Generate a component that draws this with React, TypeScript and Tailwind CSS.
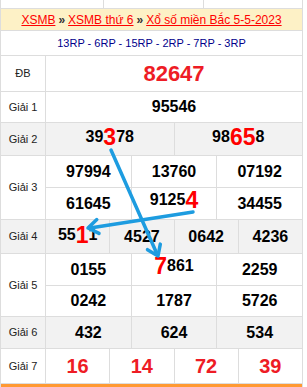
import React from "react";

const B = "border-[#dddddd]";

function Cell({ children, className = "" }: { children?: React.ReactNode; className?: string }) {
  return (
    <div className={`flex-1 flex items-center justify-center border-l ${B} ${className}`}>{children}</div>
  );
}

function Hi({ children }: { children: React.ReactNode }) {
  return <span className="text-[#ff0000] text-[23px] leading-none">{children}</span>;
}

function Row({
  label,
  h,
  gray,
  children,
}: {
  label: string;
  h: string;
  gray?: boolean;
  children: React.ReactNode;
}) {
  return (
    <div className={`flex border-b ${B} ${h} ${gray ? "bg-[#f2f2f2]" : "bg-white"}`}>
      <div className="w-[44px] flex items-center justify-center text-[11px] text-[#222]">{label}</div>
      <div className="flex-1 flex flex-col">{children}</div>
    </div>
  );
}

function Line({ children, last = true }: { children: React.ReactNode; last?: boolean }) {
  return (
    <div className={`flex flex-1 text-[16px] font-bold text-black ${last ? "" : `border-b ${B}`}`}>{children}</div>
  );
}

export default function App() {
  return (
    <div
      className="relative w-[307px] h-[387px] bg-white overflow-hidden"
      style={{ fontFamily: '"Liberation Sans", Arial, sans-serif' }}
    >
      <div className={`w-[303px] border-l border-r ${B} flex flex-col`}>
        <div className={`h-[9px] flex border-b ${B}`}>
          <div className="w-[102px]" />
          <div className={`w-[100px] border-l ${B}`} />
          <div className={`flex-1 border-l ${B}`} />
        </div>
        <div className={`h-[22px] bg-[#fdf1c6] border-b ${B} flex items-center justify-center text-[12px] text-[#ff0000] whitespace-nowrap`}>
          <span className="underline">XSMB</span>
          <span className="text-[#333] font-bold mx-[3px]">»</span>
          <span className="underline">XSMB thứ 6</span>
          <span className="text-[#333] font-bold mx-[3px]">»</span>
          <span className="underline">Xổ số miền Bắc 5-5-2023</span>
        </div>
        <div className={`h-[25px] border-b ${B} flex items-center justify-center text-[11px] text-[#00008b] pt-[1px]`}>
          13RP - 6RP - 15RP - 2RP - 7RP - 3RP
        </div>
        <Row label="ĐB" h="h-[36px]">
          <Line>
            <Cell className="text-[22px] text-[#ee1c25]">82647</Cell>
          </Line>
        </Row>
        <Row label="Giải 1" h="h-[31px]">
          <Line>
            <Cell>95546</Cell>
          </Line>
        </Row>
        <Row label="Giải 2" h="h-[33px]" gray>
          <Line>
            <Cell className="items-end pb-[6px]">
              39<Hi>3</Hi>78
            </Cell>
            <Cell className="items-end pb-[6px]">
              98<Hi>65</Hi>8
            </Cell>
          </Line>
        </Row>
        <Row label="Giải 3" h="h-[64px]">
          <Line last={false}>
            <Cell>97994</Cell>
            <Cell>13760</Cell>
            <Cell>07192</Cell>
          </Line>
          <Line>
            <Cell>61645</Cell>
            <Cell className="items-end pb-[7px]">
              9125<Hi>4</Hi>
            </Cell>
            <Cell>34455</Cell>
          </Line>
        </Row>
        <Row label="Giải 4" h="h-[34px]" gray>
          <Line>
            <Cell className="items-end pb-[6px]">
              55<Hi>1</Hi>1
            </Cell>
            <Cell>4527</Cell>
            <Cell>0642</Cell>
            <Cell>4236</Cell>
          </Line>
        </Row>
        <Row label="Giải 5" h="h-[63px]">
          <Line last={false}>
            <Cell>0155</Cell>
            <Cell className="items-end pb-[7px]">
              <Hi>7</Hi>861
            </Cell>
            <Cell>2259</Cell>
          </Line>
          <Line>
            <Cell>0242</Cell>
            <Cell>1787</Cell>
            <Cell>5726</Cell>
          </Line>
        </Row>
        <Row label="Giải 6" h="h-[32px]" gray>
          <Line>
            <Cell>432</Cell>
            <Cell>624</Cell>
            <Cell>534</Cell>
          </Line>
        </Row>
        <Row label="Giải 7" h="h-[35px]">
          <Line>
            <Cell className="text-[20px] text-[#ee1c25]">16</Cell>
            <Cell className="text-[20px] text-[#ee1c25]">14</Cell>
            <Cell className="text-[20px] text-[#ee1c25]">72</Cell>
            <Cell className="text-[20px] text-[#ee1c25]">39</Cell>
          </Line>
        </Row>
        <div className="h-[3px] bg-[#ff9933]" />
      </div>
      <svg className="absolute left-0 top-0 pointer-events-none" width="307" height="387">
        <g stroke="#1d9ce0" strokeWidth="3.5" strokeLinecap="round" strokeLinejoin="round" fill="none">
          <line x1="111" y1="150" x2="157" y2="254" />
          <polyline points="147.5,249.7 158,256 160.3,244.1" />
          <line x1="193" y1="212" x2="90" y2="228" />
          <polyline points="96.8,219.6 88,228 99,233.4" />
        </g>
      </svg>
    </div>
  );
}
